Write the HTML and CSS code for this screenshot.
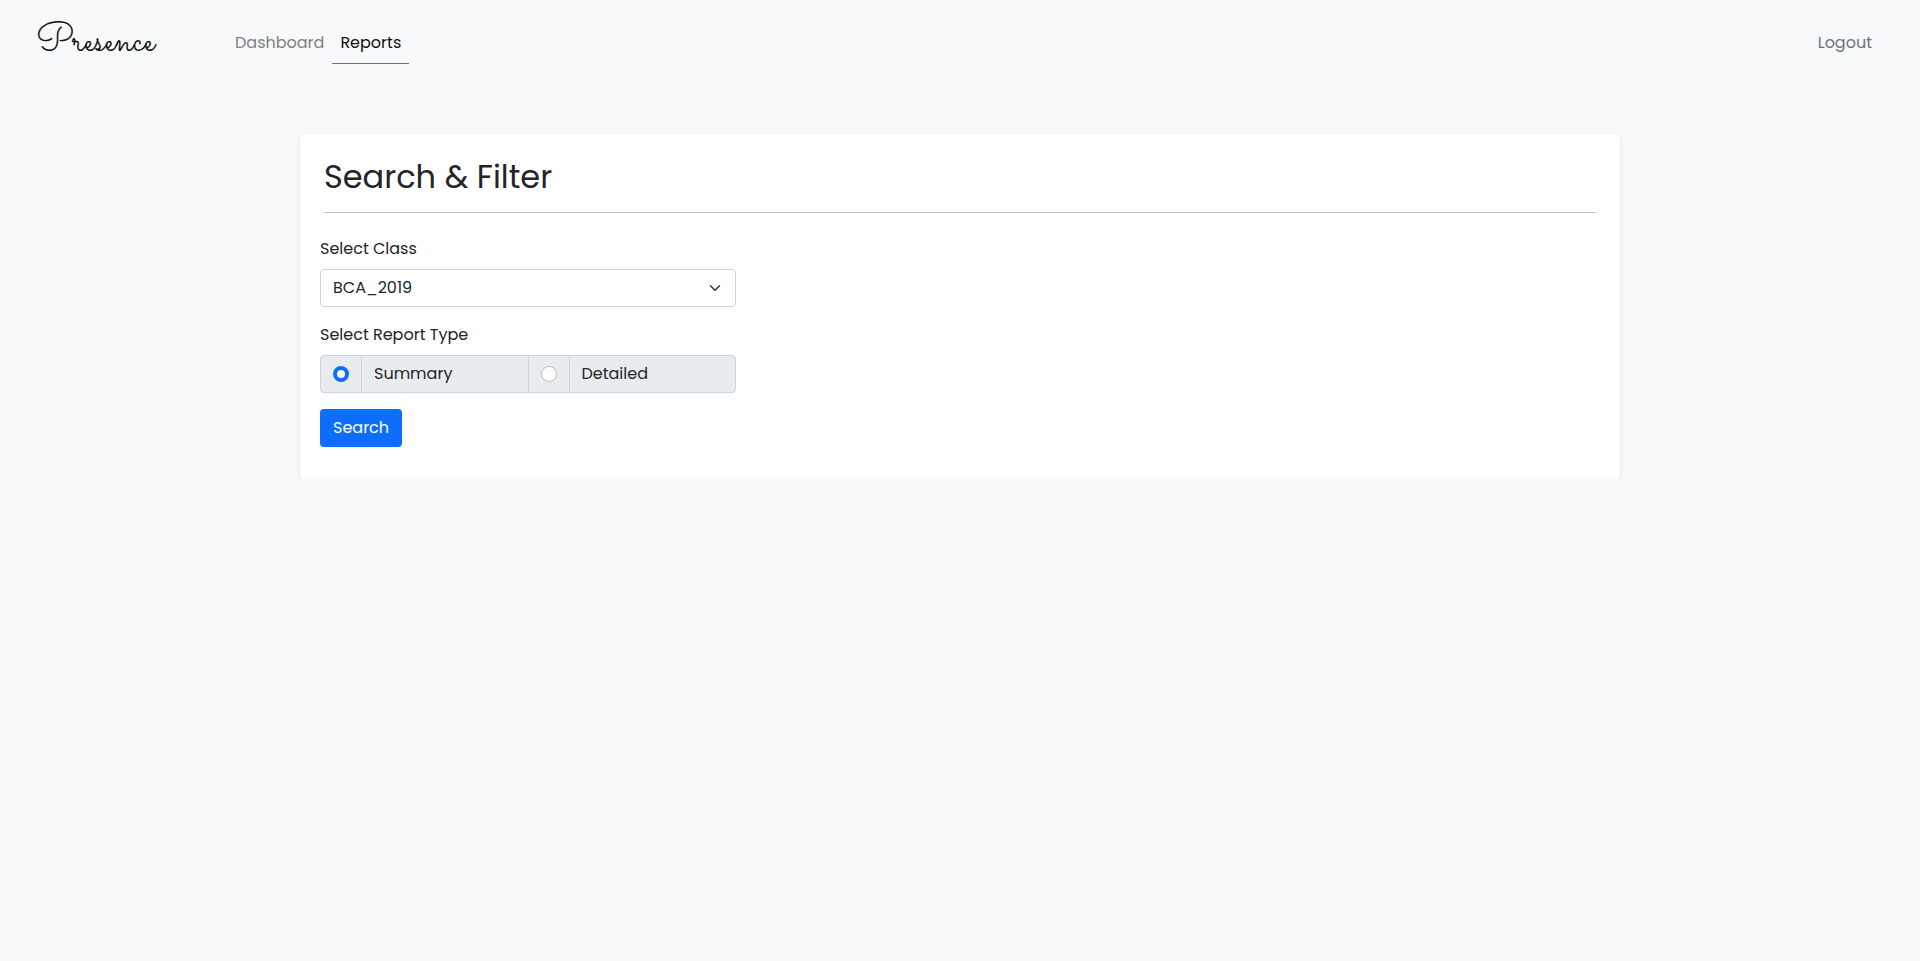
FILE: index.html
```html
<!DOCTYPE html>
<html lang="en">
<head>
  <meta charset="utf-8">
  <meta name="viewport" content="width=device-width, initial-scale=1">
  <title>Presence - Reports</title>
  <link rel="stylesheet" href="styles.css">
</head>
<body>
  <header class="navbar">
    <a class="brand" href="#">Presence</a>
    <nav class="nav">
      <a class="nav-link" href="#">Dashboard</a>
      <a class="nav-link active" href="#" aria-current="page">Reports</a>
    </nav>
    <a class="nav-link logout" href="#">Logout</a>
  </header>

  <main class="card">
    <h1 class="card-title">Search &amp; Filter</h1>
    <form class="filter-form">
      <div class="field">
        <label class="field-label" for="class-select">Select Class</label>
        <select class="select" id="class-select">
          <option selected>BCA_2019</option>
        </select>
      </div>
      <div class="field" role="radiogroup" aria-labelledby="type-label">
        <span class="field-label" id="type-label">Select Report Type</span>
        <div class="group">
          <span class="group-radio"><input class="radio" type="radio" name="type" id="type-summary" checked></span>
          <label class="group-text" for="type-summary">Summary</label>
          <span class="group-radio"><input class="radio" type="radio" name="type" id="type-detailed"></span>
          <label class="group-text" for="type-detailed">Detailed</label>
        </div>
      </div>
      <button class="button" type="button">Search</button>
    </form>
  </main>
</body>
</html>
```

FILE: styles.css
```css
*,
*::before,
*::after {
  box-sizing: border-box;
}

body {
  margin: 0;
  background: #f8f9fb;
  color: #212529;
  font-family: Poppins, Inter, "Liberation Sans", sans-serif;
  font-size: 16px;
  font-weight: 400;
  line-height: 24px;
}

.navbar {
  display: flex;
  align-items: center;
  padding: 16px 40px 16px 36px;
}

.brand {
  min-width: 191px;
  padding-bottom: 2px;
  color: #111;
  font-family: Sacramento, "Liberation Serif", serif;
  font-size: 40px;
  line-height: 52px;
  text-decoration: none;
}

.nav {
  display: flex;
  flex: 1;
}

.nav-link {
  padding: 8px;
  border-bottom: 1px solid transparent;
  color: #808080;
  text-decoration: none;
}

.nav-link.active {
  border-color: #6c757d;
  color: #111;
}

.nav-link.logout {
  color: #6c757d;
}

.card {
  max-width: 1320px;
  margin: 48px auto 0;
  padding: 24px 20px 32px;
  border-radius: 4px;
  background: #fff;
  box-shadow: 0 2px 4px rgba(0, 0, 0, 0.1);
}

.card-title {
  margin: 0 4px 24px;
  padding-bottom: 16px;
  border-bottom: 1px solid #c4c5c6;
  font-size: 32px;
  font-weight: 400;
  line-height: 38px;
}

.filter-form {
  display: flex;
  flex-direction: column;
  align-items: flex-start;
  gap: 16px;
  max-width: 416px;
}

.field {
  display: flex;
  flex-direction: column;
  gap: 8px;
  width: 100%;
}

.select {
  appearance: none;
  width: 100%;
  height: 38px;
  padding: 0 36px 0 12px;
  border: 1px solid #ced4da;
  border-radius: 4px;
  background: #fff url("data:image/svg+xml,%3csvg xmlns='http://www.w3.org/2000/svg' viewBox='0 0 16 16'%3e%3cpath fill='none' stroke='%23343a40' stroke-linecap='round' stroke-linejoin='round' stroke-width='2' d='M2 5l6 6 6-6'/%3e%3c/svg%3e") no-repeat right 14px center / 12px 12px;
  color: inherit;
  font: inherit;
}

.group {
  display: flex;
  height: 38px;
  overflow: hidden;
  border: 1px solid #ced4da;
  border-radius: 4px;
  background: #e9ecef;
}

.group-radio {
  display: flex;
  align-items: center;
  padding: 0 12px;
}

.group-text {
  flex: 1;
  padding: 6px 12px;
  border-left: 1px solid #ced4da;
}

.group-text + .group-radio {
  border-left: 1px solid #ced4da;
}

.radio {
  appearance: none;
  width: 16px;
  height: 16px;
  margin: 0;
  border: 1px solid #bfbfbf;
  border-radius: 50%;
  background: #fff;
}

.radio:checked {
  border: 4px solid #0d6efd;
}

.button {
  height: 38px;
  padding: 0 13px;
  border: 0;
  border-radius: 4px;
  background: #0d6efd;
  color: #fff;
  font: inherit;
}
```
